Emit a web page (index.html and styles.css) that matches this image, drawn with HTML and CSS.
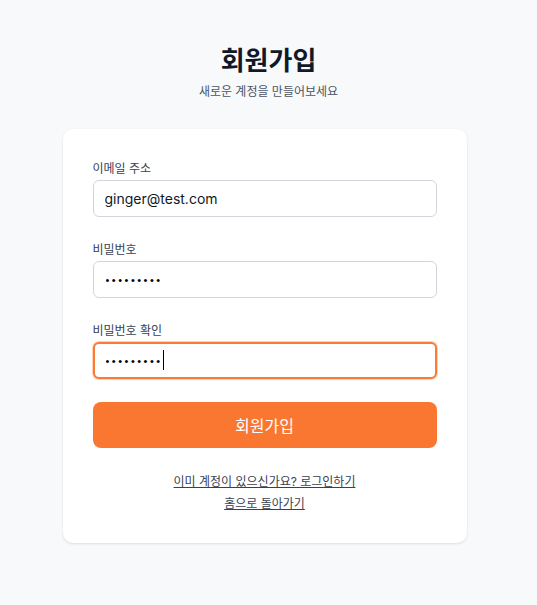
FILE: index.html
```html
<!DOCTYPE html>
<html lang="ko">
<head>
<meta charset="utf-8">
<link rel="stylesheet" href="styles.css">
</head>
<body>
<main class="page">
  <header class="head">
    <h1 class="title">회원가입</h1>
    <p class="subtitle">새로운 계정을 만들어보세요</p>
  </header>
  <section class="card">
    <form class="form">
      <div class="field">
        <label class="label" for="email">이메일 주소</label>
        <input class="input" id="email" type="email" value="ginger@test.com">
      </div>
      <div class="field">
        <label class="label" for="pw">비밀번호</label>
        <input class="input input-pw" id="pw" type="password" value="123456789">
      </div>
      <div class="field">
        <label class="label" for="pw2">비밀번호 확인</label>
        <div class="input-wrap">
          <input class="input input-pw input-focus" id="pw2" type="password" value="123456789">
          <span class="caret"></span>
        </div>
      </div>
      <button class="submit" type="button">회원가입</button>
    </form>
    <nav class="links">
      <a class="link" href="#">이미 계정이 있으신가요? 로그인하기</a>
      <a class="link" href="#">홈으로 돌아가기</a>
    </nav>
  </section>
</main>
</body>
</html>
```
FILE: styles.css
```css
* { box-sizing: border-box; }
html, body { margin: 0; padding: 0; }
body {
  background: #f8f9fb;
  font-family: Inter, "Noto Sans CJK KR", sans-serif;
  color: #111827;
  min-height: 605px;
}
.page {
  display: flex;
  flex-direction: column;
  align-items: center;
  padding-top: 46px;
}
.head { text-align: center; }
.title {
  margin: 0;
  font-size: 26px;
  line-height: 30px;
  font-weight: 700;
  color: #111827;
}
.subtitle {
  margin: 7px 0 0;
  font-size: 12px;
  line-height: 18px;
  color: #4b5563;
}
.card {
  margin-top: 28px;
  margin-right: 8px;
  width: 404px;
  background: #fff;
  border-radius: 10px;
  box-shadow: 0 1px 3px rgba(0,0,0,0.08), 0 1px 2px rgba(0,0,0,0.04);
  padding: 30px 30px 30px;
}
.form {
  display: flex;
  flex-direction: column;
  gap: 23px;
}
.field { display: flex; flex-direction: column; gap: 2px; }
.label {
  font-size: 12px;
  line-height: 19px;
  color: #374151;
  font-weight: 400;
}
.input-wrap { position: relative; display: flex; flex-direction: column; }
.input {
  height: 37px;
  border: 1px solid #d1d5db;
  border-radius: 6px;
  padding: 0 11px;
  font-family: Inter, "Noto Sans CJK KR", sans-serif;
  font-size: 14px;
  color: #111827;
  background: #fff;
  outline: none;
}
.input-pw {
  font-family: "Liberation Sans", sans-serif;
  font-size: 11px;
  letter-spacing: 2.5px;
  color: #000;
  padding-left: 12px;
}
.input-focus {
  border: 2px solid #fb7a36;
  padding-left: 11px;
  box-shadow: 0 0 0 1px rgba(251,122,54,0.35);
}
.caret {
  position: absolute;
  left: 70px;
  top: 8px;
  width: 1px;
  height: 20px;
  background: #000;
}
.submit {
  height: 46px;
  border: none;
  border-radius: 8px;
  background: #f97731;
  color: #fff;
  font-family: Inter, "Noto Sans CJK KR", sans-serif;
  font-size: 16px;
  font-weight: 400;
}
.links {
  margin-top: 25px;
  display: flex;
  flex-direction: column;
  align-items: center;
  gap: 4px;
}
.link {
  font-size: 12px;
  line-height: 18px;
  color: #374151;
  text-decoration: underline;
}
```
